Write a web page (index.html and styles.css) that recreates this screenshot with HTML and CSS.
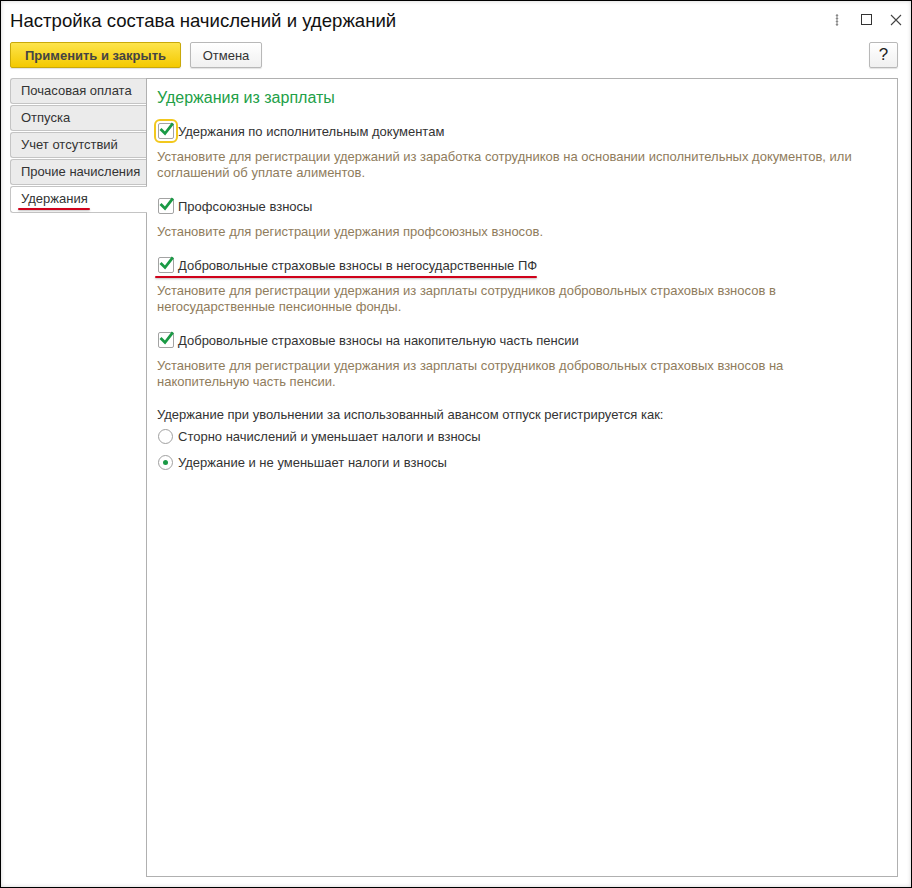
FILE: index.html
```html
<!DOCTYPE html>
<html lang="ru">
<head>
<meta charset="utf-8">
<title>Настройка состава начислений и удержаний</title>
<link rel="stylesheet" href="styles.css">
</head>
<body>
<div class="window">
  <div class="titlebar">
    <div class="title">Настройка состава начислений и удержаний</div>
    <div class="controls">
      <svg class="ctl-dots" width="4" height="12" viewBox="0 0 4 12"><circle cx="2" cy="1.5" r="1.2" fill="#888"/><circle cx="2" cy="4.5" r="1.2" fill="#888"/><circle cx="2" cy="7.5" r="1.2" fill="#888"/><circle cx="2" cy="10.5" r="1.2" fill="#888"/></svg>
      <svg class="ctl-max" width="11" height="11" viewBox="0 0 11 11"><rect x="0.5" y="0.5" width="10" height="10" fill="none" stroke="#333" stroke-width="1"/></svg>
      <svg class="ctl-close" width="12" height="12" viewBox="0 0 12 12"><path d="M1 1 L11 11 M11 1 L1 11" stroke="#444" stroke-width="1.1" fill="none"/></svg>
    </div>
  </div>
  <div class="toolbar">
    <button class="btn btn-primary">Применить и закрыть</button>
    <button class="btn btn-cancel">Отмена</button>
    <div class="spacer"></div>
    <button class="btn btn-help">?</button>
  </div>
  <div class="main">
    <div class="tabs">
      <div class="tab">Почасовая оплата</div>
      <div class="tab">Отпуска</div>
      <div class="tab">Учет отсутствий</div>
      <div class="tab">Прочие начисления</div>
      <div class="tab tab-active"><span class="marked">Удержания</span></div>
    </div>
    <div class="panel">
      <div class="group-title">Удержания из зарплаты</div>

      <div class="check-row">
        <span class="checkbox focused"><svg width="18" height="16" viewBox="0 0 18 16"><path d="M3.5 8 L7 11.5 L14 2.5" fill="none" stroke="#1a9a45" stroke-width="2.8" stroke-linecap="square"/></svg></span>
        <span class="label">Удержания по исполнительным документам</span>
      </div>
      <div class="desc">Установите для регистрации удержаний из заработка сотрудников на основании исполнительных документов, или<br>соглашений об уплате алиментов.</div>

      <div class="check-row">
        <span class="checkbox"><svg width="18" height="16" viewBox="0 0 18 16"><path d="M3.5 8 L7 11.5 L14 2.5" fill="none" stroke="#1a9a45" stroke-width="2.8" stroke-linecap="square"/></svg></span>
        <span class="label">Профсоюзные взносы</span>
      </div>
      <div class="desc">Установите для регистрации удержания профсоюзных взносов.</div>

      <div class="check-row underlined">
        <span class="checkbox"><svg width="18" height="16" viewBox="0 0 18 16"><path d="M3.5 8 L7 11.5 L14 2.5" fill="none" stroke="#1a9a45" stroke-width="2.8" stroke-linecap="square"/></svg></span>
        <span class="label">Добровольные страховые взносы в негосударственные ПФ</span>
      </div>
      <div class="desc">Установите для регистрации удержания из зарплаты сотрудников добровольных страховых взносов в<br>негосударственные пенсионные фонды.</div>

      <div class="check-row">
        <span class="checkbox"><svg width="18" height="16" viewBox="0 0 18 16"><path d="M3.5 8 L7 11.5 L14 2.5" fill="none" stroke="#1a9a45" stroke-width="2.8" stroke-linecap="square"/></svg></span>
        <span class="label">Добровольные страховые взносы на накопительную часть пенсии</span>
      </div>
      <div class="desc">Установите для регистрации удержания из зарплаты сотрудников добровольных страховых взносов на<br>накопительную часть пенсии.</div>

      <div class="question">Удержание при увольнении за использованный авансом отпуск регистрируется как:</div>
      <div class="radio-row">
        <span class="radio"></span>
        <span class="label">Сторно начислений и уменьшает налоги и взносы</span>
      </div>
      <div class="radio-row second">
        <span class="radio checked"></span>
        <span class="label">Удержание и не уменьшает налоги и взносы</span>
      </div>
    </div>
  </div>
</div>
</body>
</html>
```

FILE: styles.css
```css
* { box-sizing: border-box; }
html, body { margin: 0; padding: 0; background: #fff; }
body { font-family: "Liberation Sans", Arial, sans-serif; font-size: 13px; color: #333; }

.window {
  width: 912px;
  height: 888px;
  border: 1px solid #000;
  background: #fff;
  box-shadow: inset 0 0 4px rgba(0,0,0,0.18);
  display: flex;
  flex-direction: column;
}

.titlebar {
  height: 38px;
  display: flex;
  align-items: center;
  padding: 0 9px 0 9px;
}
.title {
  flex: 1;
  font-size: 18.6px;
  color: #111;
  padding-top: 1px;
}
.controls {
  display: flex;
  align-items: center;
  height: 12px;
  margin-top: -1px;
}
.ctl-dots { margin-right: 22px; }
.ctl-max { margin-right: 18px; }

.toolbar {
  display: flex;
  align-items: center;
  height: 26px;
  margin-top: 3px;
  padding: 0 13px 0 9px;
  gap: 9px;
}
.spacer { flex: 1; }
.btn {
  height: 26px;
  font-family: "Liberation Sans", Arial, sans-serif;
  font-size: 13px;
  color: #333;
  border: 1px solid #b8b8b8;
  border-radius: 2px;
  background: linear-gradient(#ffffff, #f0f0f0);
  box-shadow: 0 1px 1px rgba(0,0,0,0.12);
  padding: 0 13px;
  margin: 0;
}
.btn-primary {
  width: 171px;
  font-weight: bold;
  color: #444;
  background: linear-gradient(#fde44c, #f4c900);
  border-color: #c9a90a;
}
.btn-cancel { width: 72px; padding: 0; }
.btn-help {
  width: 29px;
  padding: 0;
  font-size: 17px;
  color: #222;
}

.main {
  flex: 1;
  display: flex;
  margin-top: 10px;
  padding: 0 13px 10px 9px;
}
.tabs {
  width: 136px;
  display: flex;
  flex-direction: column;
  align-items: flex-start;
}
.tab {
  width: 136px;
  height: 26px;
  margin-bottom: 1px;
  border: 1px solid #c4c4c4;
  border-right: none;
  border-radius: 3px 0 0 3px;
  background: #ebebeb;
  padding-left: 10px;
  line-height: 24px;
  color: #333;
  white-space: nowrap;
}
.tab-active {
  width: 137px;
  height: 27px;
  margin-right: -1px;
  background: #fff;
  position: relative;
  z-index: 1;
}
.marked { position: relative; }
.marked::after {
  content: "";
  position: absolute;
  left: -3px;
  right: -2px;
  bottom: -4px;
  height: 2px;
  background: #d0021b;
  border-radius: 1px;
  box-shadow: 0 1px 2px rgba(0,0,0,0.25);
}

.panel {
  flex: 1;
  border: 1px solid #b0b0b0;
  padding: 9px 10px 0 10px;
}
.group-title {
  font-size: 16px;
  line-height: 20px;
  color: #22a047;
  margin-bottom: 12px;
}
.check-row {
  display: inline-flex;
  align-items: center;
  height: 22px;
  position: relative;
}
.check-row.underlined::after {
  content: "";
  position: absolute;
  left: -2px;
  right: 0;
  bottom: -2px;
  height: 2px;
  background: #d0021b;
  border-radius: 1px;
  box-shadow: 0 1px 2px rgba(0,0,0,0.25);
}
.checkbox {
  width: 16px;
  height: 16px;
  margin-left: 1px;
  margin-right: 4px;
  border: 1px solid #a3a3a3;
  border-radius: 2px;
  background: #fff;
  position: relative;
}
.checkbox svg {
  position: absolute;
  left: -1px;
  top: -2px;
}
.checkbox.focused {
  outline: 2px solid #f2c81e;
  outline-offset: 2px;
}
.label { color: #333; white-space: nowrap; }
.desc {
  color: #8f7c5c;
  line-height: 16px;
  margin-top: 7px;
  margin-bottom: 14px;
}
.question {
  line-height: 16px;
  margin-top: 17px;
}
.radio-row {
  display: flex;
  align-items: center;
  height: 22px;
  margin-top: 2px;
}
.radio-row.second { margin-top: 4px; }
.radio {
  width: 15px;
  height: 15px;
  margin-left: 1px;
  margin-right: 5px;
  border: 1px solid #a0a0a0;
  border-radius: 50%;
  background: #fff;
  position: relative;
}
.radio.checked::after {
  content: "";
  position: absolute;
  left: 4px;
  top: 4px;
  width: 5px;
  height: 5px;
  border-radius: 50%;
  background: #1a9a45;
}
```
